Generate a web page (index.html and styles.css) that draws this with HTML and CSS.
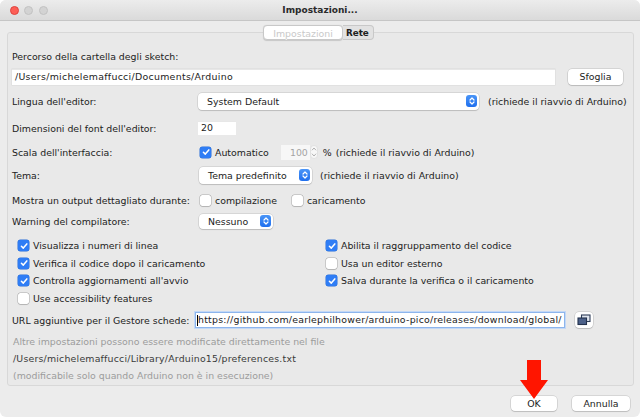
FILE: index.html
```html
<!DOCTYPE html>
<html lang="it">
<head>
<meta charset="utf-8">
<title>Impostazioni...</title>
<link rel="stylesheet" href="styles.css">
</head>
<body>
<div class="window">
  <div class="titlebar">
    <div class="lights">
      <span class="light red"></span><span class="light"></span><span class="light"></span>
    </div>
    <div class="title">Impostazioni...</div>
    <div></div>
  </div>

  <div class="tabs">
    <span class="tab active">Impostazioni</span><span class="tab">Rete</span>
  </div>

  <div class="panel">
    <div class="row-label">Percorso della cartella degli sketch:</div>
    <div class="row path-row">
      <div class="field path-field">/Users/michelemaffucci/Documents/Arduino</div>
      <div class="btn sfoglia">Sfoglia</div>
    </div>

    <div class="row r-lingua">
      <div class="lbl">Lingua dell'editor:</div>
      <div class="select sel-lingua"><span class="sel-text">System Default</span><span class="sel-arrow"><svg viewBox="0 0 10 10" width="10" height="10"><path d="M3 4 L5 2 L7 4 M3 6 L5 8 L7 6" fill="none" stroke="#fff" stroke-width="1.2" stroke-linecap="round" stroke-linejoin="round"/></svg></span></div>
      <span class="note">(richiede il riavvio di Arduino)</span>
    </div>

    <div class="row r-font">
      <div class="lbl">Dimensioni del font dell'editor:</div>
      <div class="field font-field">20</div>
    </div>

    <div class="row r-scala">
      <div class="lbl">Scala dell'interfaccia:</div>
      <span class="cb checked"><svg viewBox="0 0 10 10" width="10" height="10"><path d="M2.4 5.2 L4.3 7.1 L7.8 2.9" fill="none" stroke="#fff" stroke-width="1.5" stroke-linecap="round" stroke-linejoin="round"/></svg></span>
      <span class="cb-text">Automatico</span>
      <div class="num-field">100</div>
      <span class="spinner"><svg viewBox="0 0 8 16" width="8" height="16"><rect x="0.5" y="1.5" width="7" height="13" rx="3.5" fill="#f7f7f7" stroke="#d6d6d6" stroke-width="0.6"/><path d="M2.2 6 L4 4 L5.8 6 M2.2 10 L4 12 L5.8 10" fill="none" stroke="#a9a9a9" stroke-width="0.9" stroke-linecap="round" stroke-linejoin="round"/></svg></span>
      <span class="pct">%</span>
      <span class="note2">(richiede il riavvio di Arduino)</span>
    </div>

    <div class="row r-tema">
      <div class="lbl">Tema:</div>
      <div class="select sel-tema"><span class="sel-text">Tema predefinito</span><span class="sel-arrow"><svg viewBox="0 0 10 10" width="10" height="10"><path d="M3 4 L5 2 L7 4 M3 6 L5 8 L7 6" fill="none" stroke="#fff" stroke-width="1.2" stroke-linecap="round" stroke-linejoin="round"/></svg></span></div>
      <span class="note3">(richiede il riavvio di Arduino)</span>
    </div>

    <div class="row r-mostra">
      <div class="lbl">Mostra un output dettagliato durante:</div>
      <span class="cb"></span><span class="cb-text">compilazione</span>
      <span class="cb cb-second"></span><span class="cb-text">caricamento</span>
    </div>

    <div class="row r-warning">
      <div class="lbl">Warning del compilatore:</div>
      <div class="select sel-warn"><span class="sel-text">Nessuno</span><span class="sel-arrow"><svg viewBox="0 0 10 10" width="10" height="10"><path d="M3 4 L5 2 L7 4 M3 6 L5 8 L7 6" fill="none" stroke="#fff" stroke-width="1.2" stroke-linecap="round" stroke-linejoin="round"/></svg></span></div>
    </div>

    <div class="checks">
      <div class="chk"><span class="cb checked"><svg viewBox="0 0 10 10" width="10" height="10"><path d="M2.4 5.2 L4.3 7.1 L7.8 2.9" fill="none" stroke="#fff" stroke-width="1.5" stroke-linecap="round" stroke-linejoin="round"/></svg></span><span class="cb-text">Visualizza i numeri di linea</span></div>
      <div class="chk"><span class="cb checked"><svg viewBox="0 0 10 10" width="10" height="10"><path d="M2.4 5.2 L4.3 7.1 L7.8 2.9" fill="none" stroke="#fff" stroke-width="1.5" stroke-linecap="round" stroke-linejoin="round"/></svg></span><span class="cb-text">Abilita il raggruppamento del codice</span></div>
      <div class="chk"><span class="cb checked"><svg viewBox="0 0 10 10" width="10" height="10"><path d="M2.4 5.2 L4.3 7.1 L7.8 2.9" fill="none" stroke="#fff" stroke-width="1.5" stroke-linecap="round" stroke-linejoin="round"/></svg></span><span class="cb-text">Verifica il codice dopo il caricamento</span></div>
      <div class="chk"><span class="cb"></span><span class="cb-text">Usa un editor esterno</span></div>
      <div class="chk"><span class="cb checked"><svg viewBox="0 0 10 10" width="10" height="10"><path d="M2.4 5.2 L4.3 7.1 L7.8 2.9" fill="none" stroke="#fff" stroke-width="1.5" stroke-linecap="round" stroke-linejoin="round"/></svg></span><span class="cb-text">Controlla aggiornamenti all'avvio</span></div>
      <div class="chk"><span class="cb checked"><svg viewBox="0 0 10 10" width="10" height="10"><path d="M2.4 5.2 L4.3 7.1 L7.8 2.9" fill="none" stroke="#fff" stroke-width="1.5" stroke-linecap="round" stroke-linejoin="round"/></svg></span><span class="cb-text">Salva durante la verifica o il caricamento</span></div>
      <div class="chk"><span class="cb"></span><span class="cb-text">Use accessibility features</span></div>
    </div>

    <div class="row r-url">
      <div class="lbl url-lbl">URL aggiuntive per il Gestore schede:</div>
      <div class="field url-field"><span class="caret"></span>https://github.com/earlephilhower/arduino-pico/releases/download/global/</div>
      <div class="btn icon-btn"><svg viewBox="0 0 14 12" width="14" height="12"><rect x="4.5" y="1" width="8.5" height="6.5" fill="#dfe5ee" stroke="#2e3d58" stroke-width="1.1"/><rect x="1" y="4" width="8.5" height="6.5" fill="#4c6189" stroke="#24324d" stroke-width="1.1"/></svg></div>
    </div>

    <div class="info">
      <div class="muted">Altre impostazioni possono essere modificate direttamente nel file</div>
      <div class="dark">/Users/michelemaffucci/Library/Arduino15/preferences.txt</div>
      <div class="muted">(modificabile solo quando Arduino non è in esecuzione)</div>
    </div>
  </div>

  <div class="footer">
    <div class="btn ok">OK</div>
    <div class="btn annulla">Annulla</div>
  </div>

  <svg class="red-arrow" viewBox="0 0 28 39" width="28" height="39"><polygon points="7,0 21,0 21,20 28,20 14,39 0,20 7,20" fill="#ff1500"/></svg>
</div>
</body>
</html>
```

FILE: styles.css
```css
* { box-sizing: border-box; }
html, body { margin: 0; padding: 0; background: #ffffff; }
body {
  width: 640px;
  height: 417px;
  overflow: hidden;
  font-family: "DejaVu Sans", "Noto Sans", sans-serif;
  font-size: 9.4px;
  color: #222222;
}
.window {
  position: relative;
  width: 640px;
  height: 417px;
  background: #ececec;
  border-radius: 6px;
  overflow: hidden;
  display: flex;
  flex-direction: column;
}
.titlebar {
  flex: none;
  height: 21px;
  background: linear-gradient(#ececec, #dadada);
  border-bottom: 1px solid #c6c6c6;
  display: grid;
  grid-template-columns: 1fr auto 1fr;
  align-items: center;
}
.lights { display: flex; gap: 5.5px; padding-left: 9.5px; }
.light {
  width: 9px; height: 9px; border-radius: 50%;
  background: #d3d3d3; border: 0.5px solid #c2c2c2;
}
.light.red { background: #fd5e56; border-color: #df4540; }
.title { font-weight: bold; font-size: 9px; color: #2a2a2a; }

.tabs {
  position: relative;
  z-index: 1;
  flex: none;
  margin-top: 4px;
  display: flex;
  justify-content: center;
  padding-right: 3px;
}
.tab {
  height: 15px;
  line-height: 15px;
  background: #e2e2e2;
  border: 0.5px solid #c8c8c8;
  color: #202020;
  font-weight: bold;
  font-size: 8.8px;
  padding: 0 4px 0 3px;
  border-radius: 0 4px 4px 0;
  border-left: none;
}
.tab.active {
  background: #ffffff;
  color: #c9c9c9;
  font-weight: normal;
  font-size: 9.4px;
  padding: 0 9px;
  border-radius: 4px;
  border-left: 0.5px solid #c8c8c8;
  box-shadow: 0 0.5px 1px rgba(0,0,0,0.15);
  text-shadow: 0 0.5px 0 #ffffff;
}

.panel {
  flex: none;
  margin: -8px 0 0 7px;
  width: 627px;
  border: 1px solid #d8d8d8;
  border-radius: 3px;
  background: #e9e9e9;
  padding: 17px 0 1px 4px;
}
.row-label { height: 14px; line-height: 14px; }
.row { display: flex; align-items: center; height: 18px; }
.lbl { width: 186px; flex: none; }

.path-row { margin-top: 5px; height: 16px; }
.field {
  background: #ffffff;
  height: 16px;
  line-height: 16px;
  box-shadow: inset 0 0.5px 0 #cfcfcf, 0 0 0 0.5px #dadada;
  padding-left: 3px;
  white-space: nowrap;
  overflow: hidden;
  letter-spacing: 0.3px;
}
.path-field { width: 543px; }
.btn {
  background: #ffffff;
  border-radius: 4px;
  box-shadow: 0 0 0 0.5px rgba(0,0,0,0.18), 0 1px 1px rgba(0,0,0,0.12);
  text-align: center;
  height: 16px;
  line-height: 16px;
  color: #1c1c1c;
}
.sfoglia { width: 55px; margin-left: 13px; }

.r-lingua { margin-top: 7px; }
.select {
  display: flex;
  align-items: center;
  justify-content: space-between;
  height: 17px;
  background: #ffffff;
  border-radius: 4px;
  box-shadow: 0 0 0 0.5px rgba(0,0,0,0.16), 0 1px 1px rgba(0,0,0,0.12);
  padding: 0 2px 0 9px;
}
.sel-arrow {
  width: 11px; height: 12px;
  border-radius: 3px;
  background: linear-gradient(#4a95f7, #1f6fee);
  display: flex; align-items: center; justify-content: center;
}
.sel-lingua { width: 281px; margin-left: 0; }
.note { margin-left: 9px; }

.r-font { margin-top: 9px; }
.font-field { width: 38px; height: 14px; line-height: 14px; margin-left: 0; box-shadow: inset 0 0.5px 0 #d0d0d0; letter-spacing: 0; }

.r-scala { margin-top: 6px; }
.cb {
  width: 11px; height: 11px; flex: none;
  border-radius: 2.5px;
  background: #ffffff;
  box-shadow: 0 0 0 0.5px rgba(0,0,0,0.25), 0 0.5px 1px rgba(0,0,0,0.12);
  display: inline-flex; align-items: center; justify-content: center;
}
.cb.checked { background: #2f7df5; box-shadow: 0 0 0 0.5px #2a6fd8; }
.r-scala .cb, .r-mostra .cb { margin-left: 2px; }
.cb-text { margin-left: 4px; }
.num-field {
  width: 29px; height: 15px; line-height: 15px;
  margin-left: 12px;
  background: #f7f7f7;
  color: #a3a3a3;
  text-align: right;
  padding-right: 2px;
}
.spinner { width: 8px; height: 16px; display: inline-flex; }
.pct { margin-left: 5px; }
.note2 { margin-left: 4px; }

.r-tema { margin-top: 5px; }
.sel-tema { width: 113px; margin-left: 1px; }
.note3 { margin-left: 8px; }

.r-mostra { margin-top: 7px; }
.r-mostra .cb-second { margin-left: 15px; }

.r-warning { margin-top: 3px; }
.sel-warn { width: 74px; margin-left: 1px; height: 15px; }

.checks {
  margin-top: 7px;
  display: grid;
  grid-template-columns: 308px 1fr;
  grid-auto-rows: 17.5px;
  padding-left: 6px;
}
.chk { display: flex; align-items: center; }
.chk .cb-text { margin-left: 4px; }

.r-url { margin-top: 4px; }
.url-lbl { width: 183px; }
.url-field {
  width: 370px;
  height: 16px;
  line-height: 14px;
  border: 1px solid #8db5ec;
  box-shadow: 0 0 0 1px #c3d8f6;
  padding-left: 1px;
  color: #1a1a1a;
  display: flex;
  align-items: center;
  letter-spacing: 0.23px;
}
.caret { width: 1px; height: 11px; background: #000; flex: none; }
.icon-btn {
  width: 18px; height: 16px; margin-left: 10px;
  display: flex; align-items: center; justify-content: center;
}

.info { margin-top: 4px; padding-left: 1px; line-height: 17px; }
.muted { color: #9c9c9c; }
.dark { color: #3a3a3a; letter-spacing: 0.2px; }

.footer {
  flex: none;
  margin-top: 10px;
  display: flex;
  justify-content: flex-end;
  gap: 15px;
  padding-right: 10px;
}
.ok { width: 46px; height: 15px; line-height: 15px; }
.annulla { width: 58px; height: 15px; line-height: 15px; }

.red-arrow { position: absolute; left: 520px; top: 360px; }
```
